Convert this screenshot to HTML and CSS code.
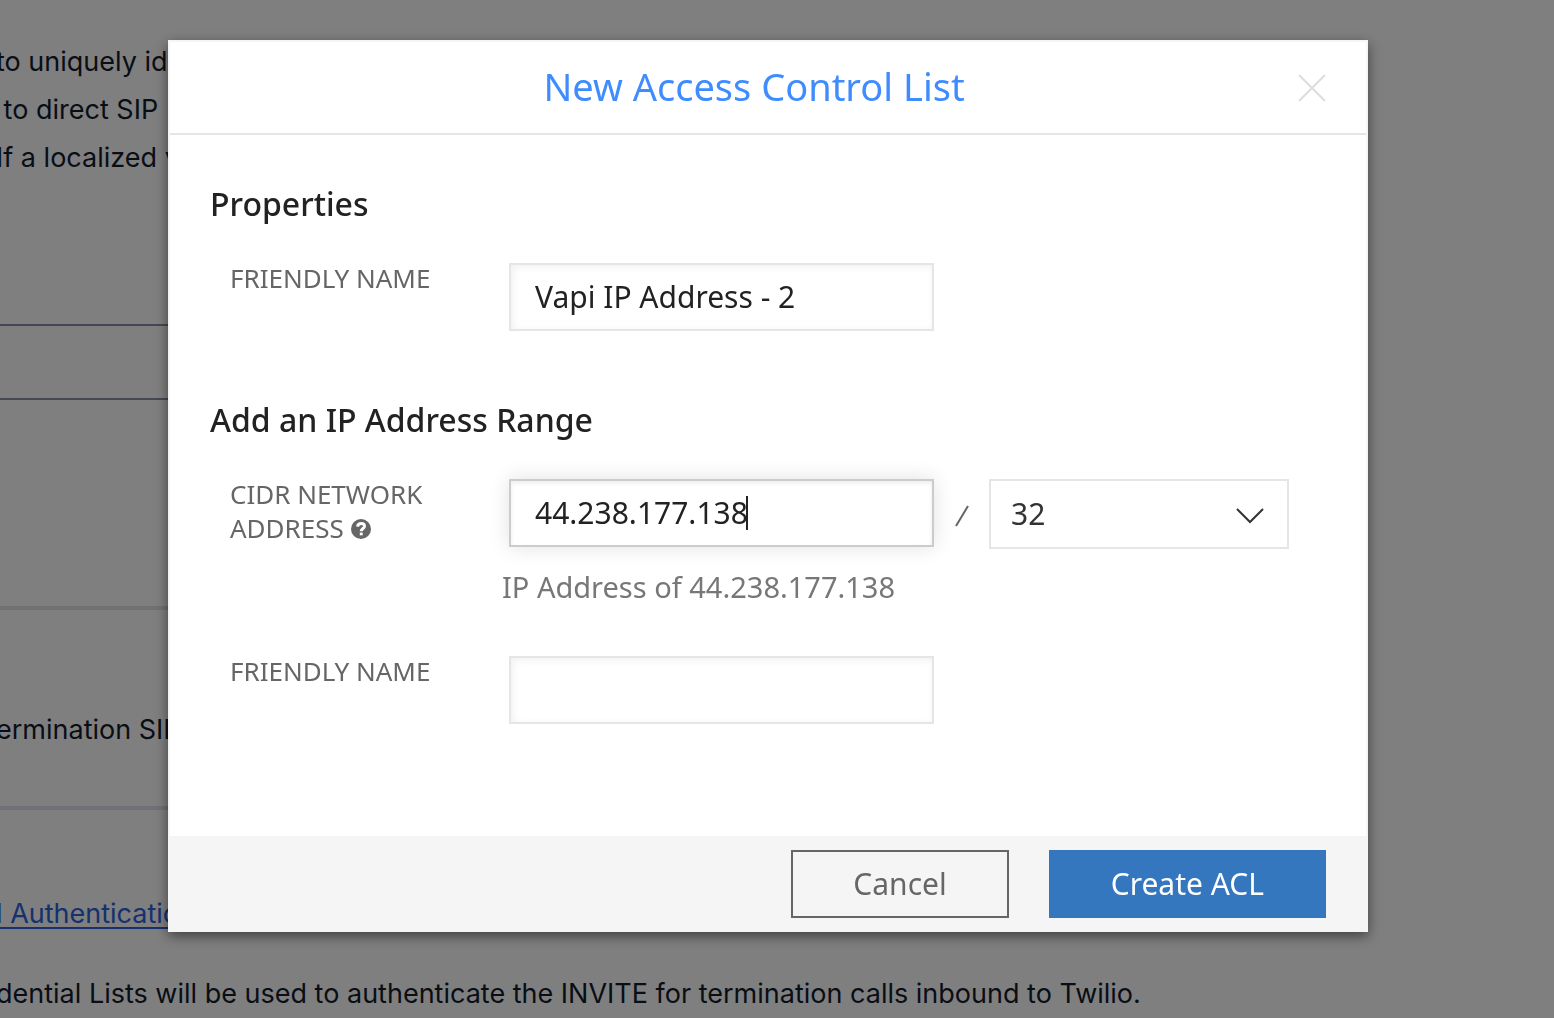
FILE: index.html
```html
<!DOCTYPE html>
<html lang="en">
<head>
  <meta charset="UTF-8">
  <title>New Access Control List</title>
  <link rel="stylesheet" href="styles.css">
</head>
<body>
<div class="page">
  <div class="intro">
    <p>to uniquely id</p>
    <p>&nbsp;to direct SIP</p>
    <p>If a localized v</p>
  </div>
  <div class="page-box"></div>
  <div class="page-section">
    <p>ermination SIP</p>
  </div>
  <div class="page-auth">
    <a href="#">l Authenticatio</a>
    <p>dential Lists will be used to authenticate the INVITE for termination calls inbound to Twilio.</p>
  </div>
</div>

<div class="overlay">
  <form class="modal" role="dialog" aria-labelledby="modal-title">
    <div class="modal-header">
      <h2 id="modal-title">New Access Control List</h2>
      <button type="button" class="close" aria-label="Close">
        <svg width="28" height="28" viewBox="0 0 28 28"><path d="M1 1L27 27M27 1L1 27"/></svg>
      </button>
    </div>

    <div class="modal-body">
      <h3>Properties</h3>
      <div class="row">
        <label for="acl-name">FRIENDLY NAME</label>
        <div class="field">
          <input type="text" id="acl-name" value="Vapi IP Address - 2">
        </div>
      </div>

      <h3 class="range-title">Add an IP Address Range</h3>
      <div class="row">
        <label for="cidr">CIDR NETWORK ADDRESS
          <svg class="help" width="20" height="20" viewBox="0 0 20 20"><circle cx="10" cy="10" r="10"/><path d="M6.6 7.6C6.8 5.3 8.2 4.4 10.1 4.4C12.2 4.4 13.5 5.6 13.5 7.2C13.5 9.5 10.2 9.4 10.2 12.2"/><rect x="8.8" y="13.6" width="2.9" height="2.7"/></svg>
        </label>
        <div class="field">
          <input type="text" id="cidr" class="active" value="44.238.177.138">
          <span class="caret"></span>
        </div>
        <span class="slash">
          <svg width="14" height="22" viewBox="0 0 14 22"><path d="M1 21L13 1"/></svg>
        </span>
        <div class="select">
          <select id="prefix" aria-label="Prefix length">
            <option>32</option>
          </select>
          <svg width="30" height="18" viewBox="0 0 30 18"><path d="M2 2L15 15L28 2"/></svg>
        </div>
      </div>
      <p class="hint">IP Address of 44.238.177.138</p>
      <div class="row">
        <label for="ip-name">FRIENDLY NAME</label>
        <div class="field">
          <input type="text" id="ip-name">
        </div>
      </div>
    </div>

    <div class="modal-footer">
      <button type="button" class="btn">Cancel</button>
      <button type="submit" class="btn primary">Create ACL</button>
    </div>
  </form>
</div>
</body>
</html>
```
FILE: styles.css
```css
* {
  box-sizing: border-box;
}
body {
  margin: 0;
  height: 100vh;
  overflow: hidden;
  background: #fff;
  font-family: "Noto Sans", "Open Sans", sans-serif;
}
h2, h3, p {
  margin: 0;
}

/* page behind the modal */
.page {
  max-width: 1300px;
  margin-left: -4px;
  padding-top: 38px;
  font-family: Inter, sans-serif;
  font-size: 27px;
  line-height: 48px;
  color: #121c2d;
  white-space: nowrap;
}
.page-box {
  height: 76px;
  margin: 142px 0 206px;
  border: 2px solid #8891aa;
}
.page-section {
  padding: 96px 0 52px;
  border-top: 4px solid #e1e3ea;
  border-bottom: 4px solid #e1e3ea;
}
.page-auth {
  padding-top: 80px;
}
.page-auth a {
  display: block;
  margin-bottom: 32px;
  color: #2a62dc;
  text-decoration-thickness: 2px;
  text-underline-offset: 4px;
}

/* modal */
.overlay {
  position: fixed;
  inset: 0;
  padding: 40px 18px 0 0;
  background: rgba(0, 0, 0, 0.5);
}
.modal {
  max-width: 1200px;
  margin: 0 auto;
  background: #fff;
  border: 2px solid #f5f5f5;
  border-bottom: none;
  box-shadow: 0 4px 12px rgba(0, 0, 0, 0.5);
}
.modal-header {
  display: flex;
  align-items: center;
  height: 93px;
  padding: 0 40px;
  border-bottom: 2px solid #e5e5e5;
}
.modal-header h2 {
  flex: 1;
  padding-bottom: 4px;
  text-align: center;
  color: #3f8cff;
  font-size: 38px;
  font-weight: 400;
  line-height: 52px;
}
.close {
  display: flex;
  padding: 0;
  border: none;
  background: none;
}
.close svg {
  fill: none;
  stroke: #ddd;
  stroke-width: 2;
}
.modal-body {
  padding: 46px 40px 112px;
}
h3 {
  margin-bottom: 36px;
  color: #222;
  font-size: 32px;
  font-weight: 500;
  line-height: 46px;
}
.range-title {
  margin-top: 66px;
}
.row {
  display: flex;
  align-items: flex-start;
  padding-left: 20px;
}
.row label {
  flex: 0 0 279px;
  margin-top: -2px;
  padding-right: 50px;
  color: #666;
  font-size: 26px;
  line-height: 34px;
}
.help {
  vertical-align: -1px;
  fill: #666;
}
.help path {
  fill: none;
  stroke: #fff;
  stroke-width: 3;
}
.help rect {
  fill: #fff;
}
.field {
  position: relative;
  flex: 0 1 425px;
}
.field input {
  display: block;
  width: 100%;
  height: 68px;
  padding: 0 24px 2px;
  border: 2px solid #e5e5e5;
  border-radius: 0;
  background: #fff;
  box-shadow: inset 2px 2px 8px rgba(0, 0, 0, 0.06);
  color: #222;
  font: inherit;
  font-size: 30px;
  outline: none;
}
.field input.active {
  border-color: #ccc;
  box-shadow: inset 0 2px 4px rgba(0, 0, 0, 0.08), 0 0 20px rgba(0, 0, 0, 0.12);
}
.caret {
  position: absolute;
  top: 17px;
  left: 237px;
  width: 2px;
  height: 34px;
  background: #222;
}
.slash {
  display: flex;
  flex: 0 0 55px;
  align-items: center;
  justify-content: center;
  height: 70px;
  padding-top: 4px;
}
.slash svg {
  fill: none;
  stroke: #666;
  stroke-width: 2;
}
.select {
  position: relative;
  flex: 0 1 300px;
}
.select select {
  display: block;
  width: 100%;
  height: 70px;
  padding: 0 20px 2px;
  border: 2px solid #e5e5e5;
  border-radius: 0;
  background: #fff;
  color: #333;
  font: inherit;
  font-size: 30px;
  appearance: none;
}
.select svg {
  position: absolute;
  top: 28px;
  right: 24px;
  fill: none;
  stroke: #333;
  stroke-width: 2;
  pointer-events: none;
}
.hint {
  margin: 18px 0 49px 292px;
  color: #777;
  font-size: 29px;
  line-height: 40px;
}
.modal-footer {
  display: flex;
  justify-content: flex-end;
  gap: 40px;
  padding: 14px 40px;
  background: #f5f5f5;
}
.btn {
  height: 68px;
  padding: 0 60px 2px;
  border: 2px solid #666;
  background: transparent;
  color: #666;
  font: inherit;
  font-size: 30px;
}
.btn.primary {
  border-color: #3577bf;
  background: #3577bf;
  color: #fff;
}
```
